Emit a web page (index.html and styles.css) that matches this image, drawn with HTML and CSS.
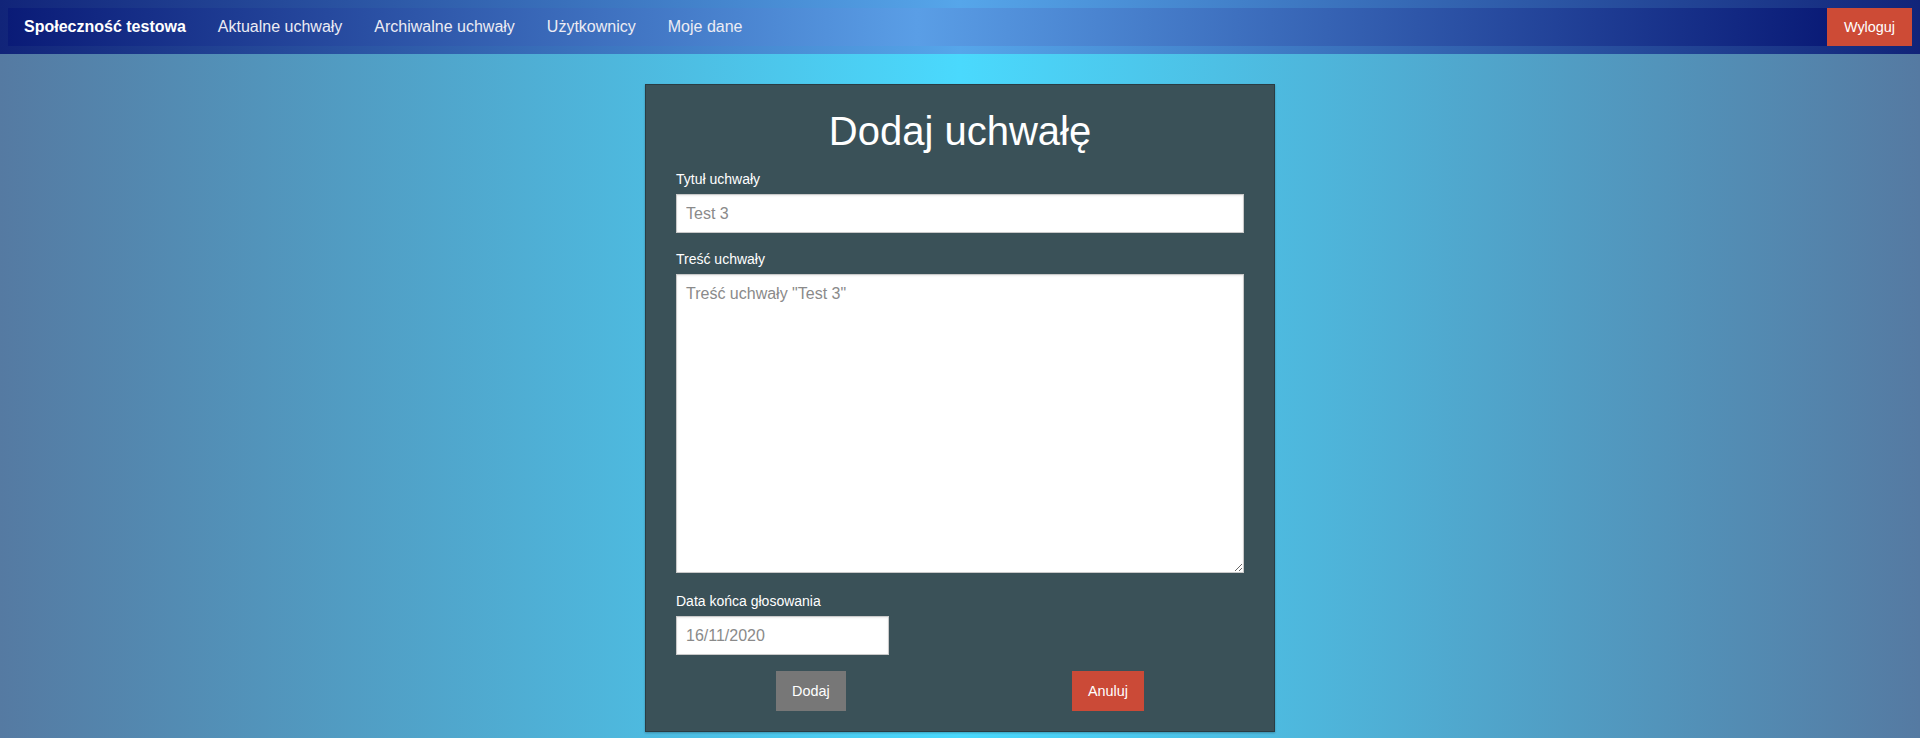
FILE: index.html
```html
<!DOCTYPE html>
<html lang="pl">
<head>
<meta charset="utf-8">
<title>Dodaj uchwałę</title>
<link rel="stylesheet" href="styles.css">
</head>
<body>
<header class="topbar">
  <nav class="nav">
    <a class="nav-brand" href="#">Społeczność testowa</a>
    <a class="nav-link" href="#">Aktualne uchwały</a>
    <a class="nav-link" href="#">Archiwalne uchwały</a>
    <a class="nav-link" href="#">Użytkownicy</a>
    <a class="nav-link" href="#">Moje dane</a>
  </nav>
  <button class="btn btn-logout" type="button">Wyloguj</button>
</header>
<main class="page">
  <form class="card">
    <h1 class="card-title">Dodaj uchwałę</h1>
    <div class="group">
      <label class="label" for="title">Tytuł uchwały</label>
      <input class="field" id="title" type="text" placeholder="Test 3">
    </div>
    <div class="group group-wide">
      <label class="label" for="body">Treść uchwały</label>
      <textarea class="field area" id="body" placeholder="Treść uchwały &quot;Test 3&quot;"></textarea>
    </div>
    <div class="group">
      <label class="label" for="date">Data końca głosowania</label>
      <input class="field date" id="date" type="text" placeholder="16/11/2020">
    </div>
    <div class="actions">
      <button class="btn btn-add" type="button">Dodaj</button>
      <button class="btn btn-cancel" type="button">Anuluj</button>
    </div>
  </form>
</main>
</body>
</html>
```
FILE: styles.css
```css
* { box-sizing: border-box; }
html, body { margin: 0; height: 100%; }
body {
  font-family: "Liberation Sans", Arial, sans-serif;
  background: linear-gradient(to right, #557aa2 0%, #4ad9fd 50%, #557aa2 100%);
  min-height: 738px;
}
.topbar {
  height: 54px;
  padding: 8px;
  display: flex;
  background: linear-gradient(to right, #112479 0%, #56a6ea 50%, #112479 100%);
}
.nav {
  flex: 1;
  display: flex;
  align-items: center;
  background: linear-gradient(to right, #0a1b77 0%, #5a9ee6 50%, #0a1b77 100%);
}
.nav-brand, .nav-link {
  padding: 0 16px;
  font-size: 16px;
  text-decoration: none;
  color: #fff;
}
.nav-brand { font-weight: bold; }
.nav-link { color: #ececf4; }
.btn {
  border: 0;
  font-family: "Liberation Sans", Arial, sans-serif;
  font-size: 14.4px;
  color: #fff;
  padding: 0 16px;
  cursor: pointer;
}
.btn-logout {
  background: #cd4b36;
  padding: 0 17px;
  height: 38px;
}
.page {
  display: flex;
  justify-content: center;
  padding-top: 30px;
}
.card {
  width: 630px;
  background: #3a5158;
  border: 1px solid #2a3c43;
  padding: 22px 30px 20px;
  box-shadow: 0 1px 2px rgba(0,0,0,.25);
}
.card-title {
  margin: 0 0 16px;
  font-size: 40px;
  font-weight: normal;
  line-height: 48px;
  text-align: center;
  color: #fff;
}
.group { margin-bottom: 18px; }
.group-wide { margin-bottom: 20px; }
.label {
  display: block;
  font-size: 14px;
  line-height: 17px;
  margin-bottom: 6px;
  color: #fff;
}
.field {
  display: block;
  width: 100%;
  height: 39px;
  padding: 0 9px;
  border: 1px solid #c9c9c9;
  background: #fff;
  font-family: "Liberation Sans", Arial, sans-serif;
  font-size: 16px;
  color: #333;
  box-shadow: inset 0 1px 2px rgba(0,0,0,.08);
}
.field::placeholder { color: #8a8a8a; }
.area {
  height: 299px;
  padding: 10px 9px;
  resize: vertical;
}
.date { width: 213px; }
.actions {
  display: flex;
  justify-content: space-between;
  padding: 0 100px;
  margin-top: -2px;
}
.actions .btn { height: 40px; }
.btn-add { background: #777; }
.btn-cancel { background: #cb4a37; }
```
